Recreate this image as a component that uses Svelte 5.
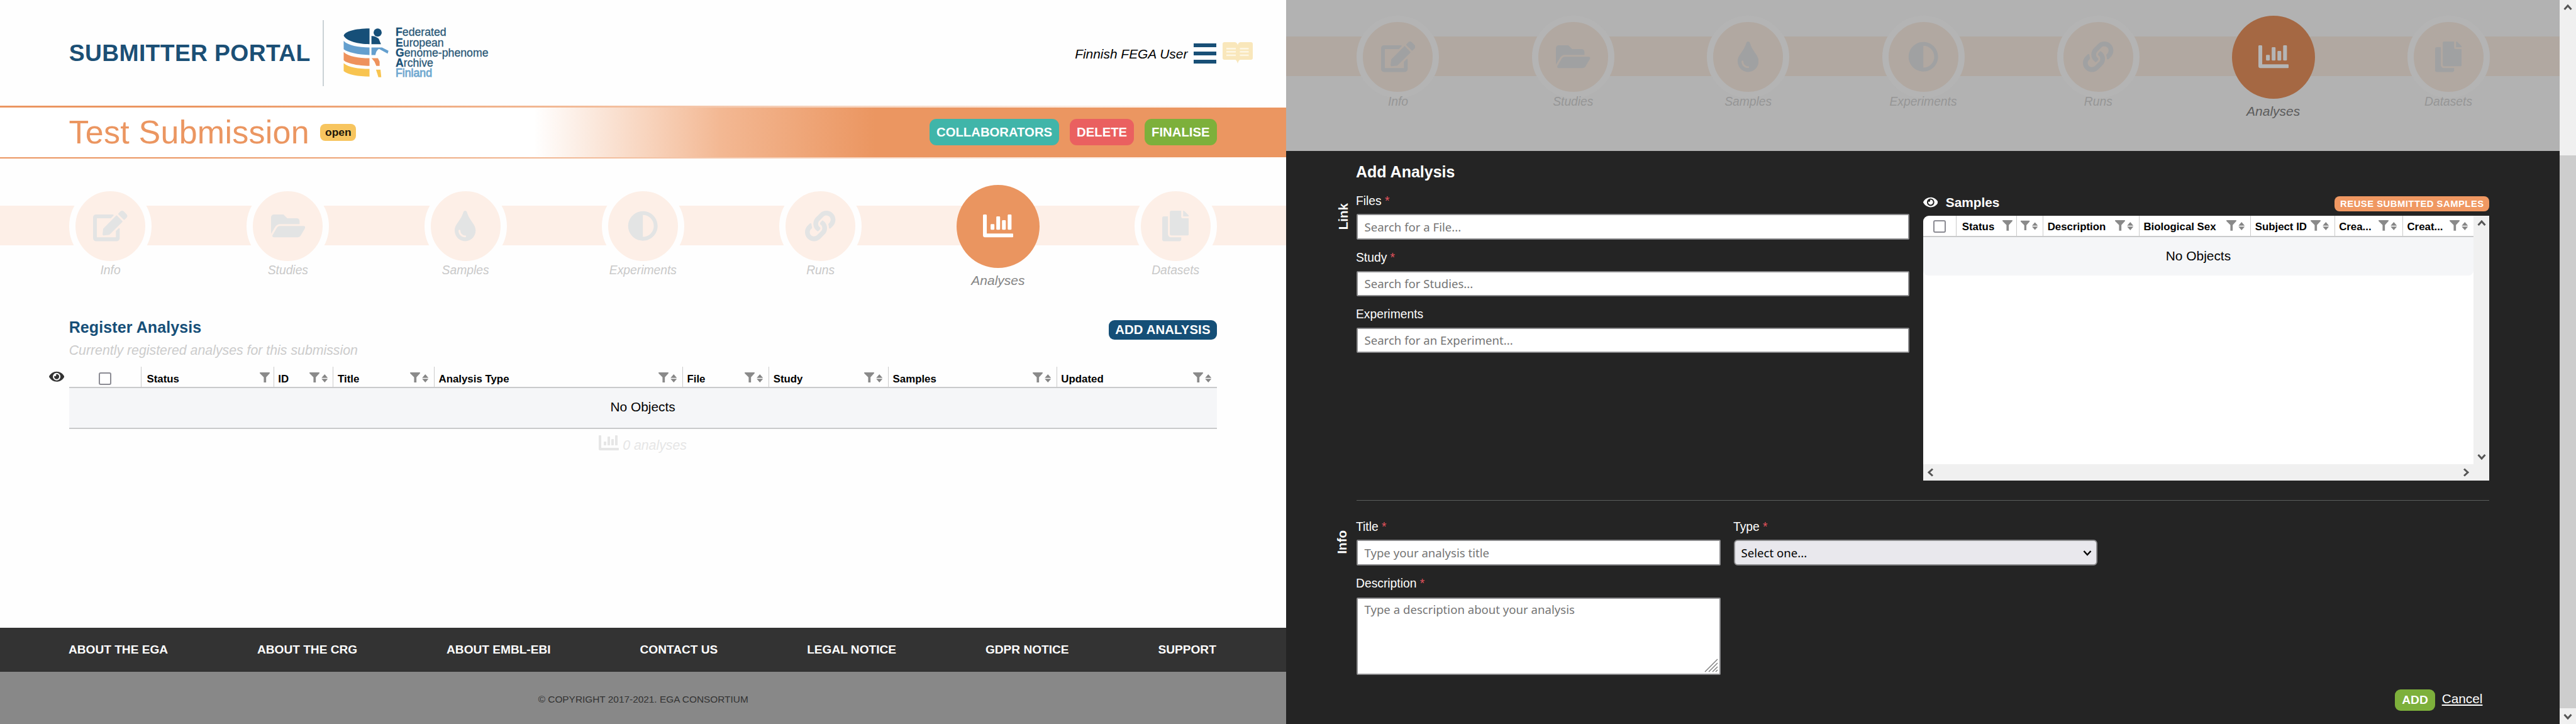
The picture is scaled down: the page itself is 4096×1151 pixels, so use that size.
<script>
  const icons = {
    edit: [576, 'M402.6 83.2l90.2 90.2c3.8 3.8 3.8 10 0 13.8L274.4 405.6l-92.8 10.3c-12.4 1.4-22.9-9.1-21.5-21.5l10.3-92.8L388.8 83.2c3.8-3.8 10-3.8 13.8 0zm162-22.9l-48.8-48.8c-15.2-15.2-39.9-15.2-55.2 0l-35.4 35.4c-3.8 3.8-3.8 10 0 13.8l90.2 90.2c3.8 3.8 10 3.8 13.8 0l35.4-35.4c15.2-15.3 15.2-40 0-55.2zM384 346.2V448H64V128h229.8c3.2 0 6.2-1.3 8.5-3.5l40-40c7.6-7.6 2.2-20.5-8.5-20.5H48C21.5 64 0 85.5 0 112v352c0 26.5 21.5 48 48 48h352c26.5 0 48-21.5 48-48V306.2c0-10.7-12.9-16-20.5-8.5l-40 40c-2.2 2.3-3.5 5.3-3.5 8.5z'],
    folder: [576, 'M572.694 292.093L500.27 416.248A63.997 63.997 0 0 1 444.989 448H45.025c-18.523 0-30.064-20.093-20.731-36.093l72.424-124.155A64 64 0 0 1 152 256h399.964c18.523 0 30.064 20.093 20.73 36.093zM152 224h328v-48c0-26.51-21.49-48-48-48H272l-64-64H48C21.49 64 0 85.49 0 112v278.046l69.077-118.418C86.214 242.25 117.989 224 152 224z'],
    tint: [352, 'M205.22 22.09c-7.94-28.78-49.44-30.12-58.44 0C100.01 179.85 0 222.72 0 333.91 0 432.35 78.72 512 176 512s176-79.65 176-178.09c0-111.75-99.79-153.34-146.78-311.82zM176 448c-61.75 0-112-50.25-112-112 0-8.84 7.16-16 16-16s16 7.16 16 16c0 44.11 35.89 80 80 80 8.84 0 16 7.16 16 16s-7.16 16-16 16z'],
    adjust: [512, 'M8 256c0 136.966 111.033 248 248 248s248-111.034 248-248S392.966 8 256 8 8 119.033 8 256zm248 184V72c101.705 0 184 82.311 184 184 0 101.705-82.311 184-184 184z'],
    link: [512, 'M326.612 185.391c59.747 59.809 58.927 155.698.36 214.59-.11.12-.24.25-.36.37l-67.2 67.2c-59.27 59.27-155.699 59.262-214.96 0-59.27-59.26-59.27-155.7 0-214.96l37.106-37.106c9.84-9.84 26.786-3.3 27.294 10.606.648 17.722 3.826 35.527 9.69 52.721 1.986 5.822.567 12.262-3.783 16.612l-13.087 13.087c-28.026 28.026-28.905 73.66-1.155 101.96 28.024 28.579 74.086 28.749 102.325.51l67.2-67.19c28.191-28.191 28.073-73.757 0-101.83-3.701-3.694-7.429-6.564-10.341-8.569a16.037 16.037 0 0 1-6.947-12.606c-.396-10.567 3.348-21.456 11.698-29.806l21.054-21.055c5.521-5.521 14.182-6.199 20.584-1.731a152.482 152.482 0 0 1 20.522 17.197zM467.547 44.449c-59.261-59.262-155.69-59.27-214.96 0l-67.2 67.2c-.12.12-.25.25-.36.37-58.566 58.892-59.387 154.781.36 214.59a152.454 152.454 0 0 0 20.521 17.196c6.402 4.468 15.064 3.789 20.584-1.731l21.054-21.055c8.35-8.35 12.094-19.239 11.698-29.806a16.037 16.037 0 0 0-6.947-12.606c-2.912-2.005-6.64-4.875-10.341-8.569-28.073-28.073-28.191-73.639 0-101.83l67.2-67.19c28.239-28.239 74.3-28.069 102.325.51 27.75 28.3 26.872 73.934-1.155 101.96l-13.087 13.087c-4.35 4.35-5.769 10.79-3.783 16.612 5.864 17.194 9.042 34.999 9.69 52.721.509 13.906 17.454 20.446 27.294 10.606l37.106-37.106c59.271-59.259 59.271-155.699.001-214.959z'],
    copy: [448, 'M320 448v40c0 13.255-10.745 24-24 24H24c-13.255 0-24-10.745-24-24V120c0-13.255 10.745-24 24-24h72v296c0 30.879 25.121 56 56 56h168zm0-344V0H152c-13.255 0-24 10.745-24 24v368c0 13.255 10.745 24 24 24h272c13.255 0 24-10.745 24-24V128H344c-13.2 0-24-10.8-24-24zm120.971-31.029L375.029 7.029A24 24 0 0 0 358.059 0H352v96h96v-6.059a24 24 0 0 0-7.029-16.97z'],
    chart: [512, 'M332.8 320h38.4c6.4 0 12.8-6.4 12.8-12.8V172.8c0-6.4-6.4-12.8-12.8-12.8h-38.4c-6.4 0-12.8 6.4-12.8 12.8v134.4c0 6.4 6.4 12.8 12.8 12.8zm96 0h38.4c6.4 0 12.8-6.4 12.8-12.8V76.8c0-6.4-6.4-12.8-12.8-12.8h-38.4c-6.4 0-12.8 6.4-12.8 12.8v230.4c0 6.4 6.4 12.8 12.8 12.8zm-288 0h38.4c6.4 0 12.8-6.4 12.8-12.8v-70.4c0-6.4-6.4-12.8-12.8-12.8h-38.4c-6.4 0-12.8 6.4-12.8 12.8v70.4c0 6.4 6.4 12.8 12.8 12.8zm96 0h38.4c6.4 0 12.8-6.4 12.8-12.8V108.8c0-6.4-6.4-12.8-12.8-12.8h-38.4c-6.4 0-12.8 6.4-12.8 12.8v198.4c0 6.4 6.4 12.8 12.8 12.8zM496 384H64V80c0-8.84-7.16-16-16-16H16C7.16 64 0 71.16 0 80v336c0 17.67 14.33 32 32 32h464c8.84 0 16-7.16 16-16v-32c0-8.84-7.16-16-16-16z'],
    eye: [576, 'M572.52 241.4C518.29 135.59 410.93 64 288 64S57.68 135.64 3.48 241.41a32.35 32.35 0 0 0 0 29.19C57.71 376.41 165.07 448 288 448s230.32-71.64 284.52-177.41a32.35 32.35 0 0 0 0-29.19zM288 400a144 144 0 1 1 144-144 143.93 143.93 0 0 1-144 144zm0-240a95.31 95.31 0 0 0-25.31 3.79 47.85 47.85 0 0 1-66.9 66.9A95.78 95.78 0 1 0 288 160z']
  };

  const steps = [
    { label: 'Info', icon: 'edit' },
    { label: 'Studies', icon: 'folder' },
    { label: 'Samples', icon: 'tint' },
    { label: 'Experiments', icon: 'adjust' },
    { label: 'Runs', icon: 'link' },
    { label: 'Analyses', icon: 'chart', active: true },
    { label: 'Datasets', icon: 'copy' }
  ];

  const analysisColumns = [
    { label: 'Status', sort: false },
    { label: 'ID', sort: true },
    { label: 'Title', sort: true },
    { label: 'Analysis Type', sort: true },
    { label: 'File', sort: true },
    { label: 'Study', sort: true },
    { label: 'Samples', sort: true },
    { label: 'Updated', sort: true }
  ];

  const sampleColumns = [
    { label: 'Status', sort: false },
    { label: '', sort: true },
    { label: 'Description', sort: true },
    { label: 'Biological Sex', sort: true },
    { label: 'Subject ID', sort: true },
    { label: 'Crea...', sort: true },
    { label: 'Creat...', sort: true }
  ];

  const linkFields = [
    { label: 'Files', required: true, placeholder: 'Search for a File...' },
    { label: 'Study', required: true, placeholder: 'Search for Studies...' },
    { label: 'Experiments', required: false, placeholder: 'Search for an Experiment...' }
  ];

  const footerLinks = ['ABOUT THE EGA', 'ABOUT THE CRG', 'ABOUT EMBL-EBI', 'CONTACT US', 'LEGAL NOTICE', 'GDPR NOTICE', 'SUPPORT'];
</script>

{#snippet icon(name)}
  <svg class="icon" viewBox="0 0 {icons[name][0]} 512" aria-hidden="true"><path d={icons[name][1]} /></svg>
{/snippet}

{#snippet stepper()}
  <nav class="steps">
    {#each steps as step}
      <div class="step" class:active={step.active}>
        <div class="slot"><div class="disc">{@render icon(step.icon)}</div></div>
        <span class="caption">{step.label}</span>
      </div>
    {/each}
  </nav>
{/snippet}

{#snippet headCells(columns)}
  <div class="cell check"><span class="box"></span></div>
  {#each columns as column}
    <div class="cell" class:unsorted={!column.sort}>
      <span class="name">{column.label}</span>
      <svg class="funnel" viewBox="0 0 16 17" aria-hidden="true"><path d="M0 0h16v1.6L10.2 8v9H6.4V8L0 1.6z" /></svg>
      {#if column.sort}
        <svg class="sort" viewBox="0 0 10 13" aria-hidden="true"><path d="M5 0l5 5.700H0zM5 13L0 7.300h10z" /></svg>
      {/if}
    </div>
  {/each}
{/snippet}

{#snippet chevron(direction)}
  <svg class="chevron {direction}" viewBox="0 0 14 14" aria-hidden="true"><path d="M1.5 10L7 4l5.500 6" /></svg>
{/snippet}

<div class="screens">
  <section class="portal">
    <header>
      <h1>SUBMITTER PORTAL</h1>
      <div class="brand">
        <svg class="mark" viewBox="52 65 302 330" aria-hidden="true">
          <g fill="#164f78">
            <path d="M54 118C62 88 130 71 225 70V174C150 173 72 155 54 118z" />
            <circle cx="279" cy="97" r="27" />
            <path d="M238 120Q262 118 286 138L301 174H238z" />
          </g>
          <g fill="#649fce">
            <path d="M54 152C85 184 150 194 225 196V246C150 244 82 230 54 208z" />
            <path d="M238 196H308L351 218L345 237L288 205Q268 216 264 246H238z" />
          </g>
          <g fill="#ee925c">
            <path d="M54 226C85 256 150 266 225 267V318C150 316 75 302 54 280z" />
            <path d="M239 267H281L292 290V318H270L258 290z" />
          </g>
          <g fill="#f8c450">
            <path d="M54 300C85 328 150 337 225 338V389C150 387 82 376 54 352z" />
            <path d="M268 343H298L303 393H284z" />
          </g>
        </svg>
        <div class="brand-name">
          <span><b>F</b>ederated</span>
          <span><b>E</b>uropean</span>
          <span><b>G</b>enome-phenome</span>
          <span><b>A</b>rchive</span>
          <span class="country">Finland</span>
        </div>
      </div>
      <div class="account">
        <em>Finnish FEGA User</em>
        <div class="burger"><i></i><i></i><i></i></div>
        <svg class="book" viewBox="0 0 48 34" aria-hidden="true">
          <path d="M3 0H20Q23.500 1 24 5Q24.500 1 28 0H45Q48 0 48 3V25Q48 28 45 28H28Q25.500 28.500 24 34Q22.500 28.500 20 28H3Q0 28 0 25V3Q0 0 3 0z" />
          <g><rect x="6" y="9" width="15" height="2.600" /><rect x="6" y="14" width="15" height="2.600" /><rect x="6" y="19.500" width="15" height="2.600" /><rect x="27.500" y="9" width="14" height="2.600" /><rect x="27.500" y="14" width="14" height="2.600" /><rect x="27.500" y="19.500" width="14" height="2.600" /></g>
        </svg>
      </div>
    </header>

    <div class="rule"></div>
    <div class="band">
      <span class="submission">Test Submission</span>
      <span class="state">open</span>
      <div class="actions">
        <button class="btn teal">COLLABORATORS</button>
        <button class="btn red">DELETE</button>
        <button class="btn green">FINALISE</button>
      </div>
    </div>
    <div class="rule"></div>

    {@render stepper()}

    <main>
      <div class="heading">
        <h2>Register Analysis</h2>
        <button class="btn navy">ADD ANALYSIS</button>
      </div>
      <p class="hint">Currently registered analyses for this submission</p>
      <div class="listing">
        <div class="toggle">{@render icon('eye')}</div>
        <div class="table">
          <div class="head">{@render headCells(analysisColumns)}</div>
          <div class="empty">No Objects</div>
        </div>
      </div>
      <div class="count">{@render icon('chart')}<em>0 analyses</em></div>
    </main>

    <footer>
      <div class="links">
        {#each footerLinks as link}<span>{link}</span>{/each}
      </div>
      <div class="legal">© COPYRIGHT 2017-2021. EGA CONSORTIUM</div>
    </footer>
  </section>

  <section class="dialog">
    <div class="dimmed">{@render stepper()}</div>

    <form class="modal">
      <h2>Add Analysis</h2>

      <div class="group">
        <span class="side">Link</span>
        <div class="linking">
          <div class="fields">
            {#each linkFields as field}
              <label>
                <span class="label">{field.label}{#if field.required}<i>*</i>{/if}</span>
                <input type="text" placeholder={field.placeholder} />
              </label>
            {/each}
          </div>
          <div class="samples">
            <div class="samples-title">
              {@render icon('eye')}
              <strong>Samples</strong>
              <button type="button" class="reuse">REUSE SUBMITTED SAMPLES</button>
            </div>
            <div class="pane">
              <div class="table">
                <div class="head">{@render headCells(sampleColumns)}</div>
                <div class="empty">No Objects</div>
              </div>
              <div class="vbar">{@render chevron('up')}{@render chevron('down')}</div>
              <div class="hbar">{@render chevron('left')}{@render chevron('right')}</div>
              <div class="corner"></div>
            </div>
          </div>
        </div>
      </div>

      <hr />

      <div class="group info">
        <span class="side">Info</span>
        <div class="details">
          <label>
            <span class="label">Title<i>*</i></span>
            <input type="text" placeholder="Type your analysis title" />
          </label>
          <label>
            <span class="label">Type<i>*</i></span>
            <span class="picker">
              <select><option>Select one...</option></select>
              {@render chevron('down')}
            </span>
          </label>
          <label class="long">
            <span class="label">Description<i>*</i></span>
            <span class="area">
              <textarea placeholder="Type a description about your analysis"></textarea>
              <svg class="grip" viewBox="0 0 22 22" aria-hidden="true"><path d="M1 21L21 1M7 21L21 7M13 21L21 13M18 21L21 18" /></svg>
            </span>
          </label>
        </div>
      </div>

      <div class="submit">
        <button type="button" class="add">ADD</button>
        <a href="#cancel">Cancel</a>
      </div>
    </form>
  </section>

  <div class="scrollbar">{@render chevron('up')}<div class="thumb"></div>{@render chevron('down')}</div>
</div>

<style>
  :global(body) { margin: 0; overflow: hidden; background: #fff; }
  .screens {
    display: flex; width: 4096px; height: 1151px; overflow: hidden;
    font-family: 'Liberation Sans', Arial, sans-serif; color: #000;
  }
  .screens :is(h1, h2, p, button) { margin: 0; padding: 0; border: 0; font-family: inherit; }
  b, strong { font-weight: 700; }
  .icon { display: block; fill: currentColor; }

  .portal { width: 2045.4px; flex: none; display: flex; flex-direction: column; background: #fefefe; }
  header { display: flex; align-items: center; height: 168px; padding: 0 53px 0 109.700px; box-sizing: border-box; flex: none; }
  h1 { width: 403.300px; white-space: nowrap; font-size: 37.3px; line-height: 44px; letter-spacing: 0.350px; color: #1b4f75; }
  .brand { display: flex; align-items: center; height: 105px; padding-left: 31px; border-left: 2px solid #cbd2d6; gap: 10.500px; }
  .mark { width: 72.500px; height: 79.3px; }
  .brand-name { display: flex; flex-direction: column; font-size: 17.700px; color: #2a5877; -webkit-text-stroke: 0.3px #2a5877; }
  .brand-name span { line-height: 16.3px; white-space: nowrap; }
  .brand-name b { color: #164f78; }
  .brand-name .country { color: #70a8d0; -webkit-text-stroke: 0.8px #70a8d0; }
  .account { display: flex; align-items: center; margin-left: auto; }
  .account em { font-size: 20.9px; line-height: 24px; margin: 4px 9.500px 0 0; white-space: nowrap; }
  .burger { display: flex; flex-direction: column; justify-content: space-between; width: 36.500px; height: 31.700px; margin: 2px 10px 0 0; }
  .burger i { height: 6px; background: #184f76; }
  .book { width: 48px; height: 34px; fill: #f9e7bb; }
  .book g { fill: #fdf6e3; }

  .rule { flex: none; height: 2.700px; background: linear-gradient(90deg, #eb9661, #eb9661 15%, #fff); }
  .band {
    flex: none; display: flex; align-items: center; height: 79.100px; padding: 0 110.900px 0 109.500px;
    background: linear-gradient(90deg, #fff 41.500%, #f3b893 56%, #eb9661 68%);
  }
  .submission { font-size: 52px; line-height: 60px; letter-spacing: 0.250px; color: #eb9661; white-space: nowrap; }
  .state { margin-left: 17.500px; width: 57px; height: 27px; line-height: 27px; border-radius: 8px; background: #f7c55f; text-align: center; font-size: 17.400px; font-weight: 700; color: #1c160a; }
  .actions { display: flex; gap: 17px; margin-left: auto; }
  .btn { height: 42.3px; border-radius: 11px; color: #fff; font-size: 20.3px; font-weight: 700; line-height: 42px; text-align: center; white-space: nowrap; }
  .screens .btn { padding: 0 11px; }
  .teal { background: #40b5a9; }
  .red { background: #ea6060; }
  .green { background: #7db03b; }

  .steps {
    display: flex; justify-content: space-between; padding: 41.600px 110.900px 0 110.300px; height: 214.800px; box-sizing: content-box; flex: none;
    background: linear-gradient(#fdefe7, #fdefe7) 0 74.500px / 100% 63.200px no-repeat;
  }
  .step { width: 130.600px; display: flex; flex-direction: column; align-items: center; color: #e3e4e4; }
  .slot { height: 131px; display: flex; align-items: center; justify-content: center; }
  .disc { width: 111px; height: 111px; border: 10px solid #fefefe; border-radius: 50%; background: #fdefe7; display: flex; align-items: center; justify-content: center; }
  .disc .icon { height: 48.400px; }
  .caption { margin-top: -5.600px; font-size: 19.300px; line-height: 22px; font-style: italic; color: #c9c9c9; white-space: nowrap; }
  .active { color: #fff; }
  .active .disc { width: 132px; height: 132px; border: 0; background: #ea9560; }
  .active .caption { margin-top: 10.300px; font-size: 21px; color: #858585; }

  main { padding: 0 110.900px 0 109.700px; flex: 1; }
  .heading { display: flex; justify-content: space-between; height: 31.500px; }
  .heading h2 { font-size: 25px; line-height: 23.400px; letter-spacing: 0.100px; color: #164f78; }
  .btn.navy { height: 31.500px; line-height: 31.500px; border-radius: 9px; background: #154f77; font-size: 20.3px; letter-spacing: 0.150px; }
  .screens .navy { padding: 0; width: 171.200px; }
  .hint { padding-top: 3.800px !important; font-size: 21.300px; line-height: 26px; font-style: italic; color: #cccccc; }
  .listing { display: grid; grid-template-columns: 31.400px 1fr; margin: 12.400px 0 0 -31.400px; }
  .toggle { padding-top: 5.500px; color: #333; }
  .toggle .icon { height: 21.500px; }
  .head { display: grid; }
  .portal .head { grid-template-columns: 114.300px 210.800px 94.700px 160.500px 395px 137.200px 189.900px 267.800px 254.600px; height: 32.900px; border-bottom: 2px solid #c9cacb; }
  .cell { display: flex; align-items: flex-start; padding: 0 8.300px 0 6.500px; border-left: 1.500px solid #cbcbcb; overflow: hidden; min-width: 0; box-sizing: border-box; }
  .cell.unsorted { padding: 0 6px 0 8.500px; }
  .cell.check { border-left: 0; justify-content: center; padding: 0; }
  .name { flex: 1; font-size: 16.850px; font-weight: 700; line-height: 39.400px; white-space: nowrap; }
  .box { width: 15.500px; height: 16px; margin: 9.200px 0 0; border: 2.800px solid #8b8b93; border-radius: 3px; background: #fff; }
  .funnel { width: 16px; height: 16.700px; margin-top: 9.200px; fill: #8a8a8a; }
  .sort { width: 10.500px; height: 13px; margin: 12px 0 0 3px; fill: #858585; }
  .empty { display: flex; align-items: center; justify-content: center; background: #f5f6f8; font-size: 20.900px; }
  .portal .empty { height: 59.300px; padding-bottom: 3px; border-bottom: 2px solid #c9cacb; }
  .count { display: flex; justify-content: center; align-items: flex-start; gap: 6px; padding-top: 6.300px; color: #e6e6e6; }
  .count .icon { height: 32px; }
  .count em { font-size: 21.300px; line-height: 41.600px; }

  footer { flex: none; }
  .links { display: flex; justify-content: space-between; align-items: center; height: 69.200px; padding: 0 111.500px 0 109px; background: #333; color: #fff; font-size: 19.100px; font-weight: 700; }
  .legal { height: 83.400px; line-height: 87px; background: #888; text-align: center; color: #333; font-size: 15.400px; }

  .dialog { flex: 1; display: flex; flex-direction: column; background: #242424; }
  .dimmed { height: 240px; flex: none; overflow: hidden; background: #b2b2b2; }
  .dimmed .steps { padding: 25.100px 111.600px 0 112.300px; background: linear-gradient(#b1a8a1, #b1a8a1) 0 58px / 100% 63.400px no-repeat; }
  .dimmed .step { color: #a0a1a2; }
  .dimmed .disc { border-color: #b4b4b4; background: #b1a8a1; }
  .dimmed .caption { color: #969696; }
  .dimmed .active { color: #b5b5b5; }
  .dimmed .active .disc { background: #a56843; }
  .dimmed .active .caption { margin-top: 9.700px; color: #5c5c5c; }

  .modal { flex: 1; padding: 18.300px 111.600px 0 111.600px; color: #fff; }
  .modal h2 { font-size: 25px; line-height: 30px; margin-left: -1px; }
  .group { display: grid; grid-template-columns: 33px 1fr; align-items: start; margin: 19.500px 0 0 -33px; }
  .side { writing-mode: vertical-rl; transform: rotate(180deg); justify-self: start; width: 24px; line-height: 24px; margin-top: 15px; font-size: 20.500px; font-weight: 700; }
  .linking { display: grid; grid-template-columns: 879px 900.700px; gap: 21.700px; }
  .fields { display: flex; flex-direction: column; gap: 17.200px; }
  label { display: flex; flex-direction: column; gap: 8.700px; }
  .label { font-size: 19.300px; line-height: 24px; margin-left: -1px; }
  .label i { font-style: normal; color: #e0525c; margin-left: 5.300px; }
  input, select, textarea {
    display: block; width: 100%; height: 40.300px; box-sizing: border-box; margin: 0; padding: 0 10.500px;
    border: 2px solid #8b8b8d; border-radius: 2px; background: #fff; font: 18.600px 'Noto Sans', sans-serif; outline: 0;
  }
  ::placeholder { color: #757575; opacity: 1; }
  .samples-title { display: flex; align-items: center; height: 24.500px; margin-top: 3.900px; }
  .samples-title .icon { height: 21px; margin: -4px 12.500px 0 0; }
  .samples-title strong { font-size: 20.800px; line-height: 24px; margin-top: -3.500px; }
  .reuse { margin-left: auto !important; width: 246px; height: 24.500px; border-radius: 8px; background: #f09862; color: #fff; font-size: 14.800px; font-weight: 700; line-height: 24.500px; letter-spacing: 0.500px; white-space: nowrap; }
  .pane { display: grid; grid-template: 394.800px 25.400px / 1fr 25.200px; margin-top: 7.300px; border-radius: 9px 0 0 0; overflow: hidden; background: #fff; color: #000; }
  .pane .head { grid-template-columns: 52.600px 95.500px 42.400px 152.800px 177.200px 133.500px 108.300px 113.200px; height: 31.300px; border-bottom: 2px solid #c9cacb; }
  .pane .name { line-height: 35.800px; }
  .pane .box { margin-top: 6.500px; }
  .pane .funnel { margin-top: 7px; }
  .pane .sort { margin-top: 9.800px; }
  .pane .empty { height: 61px; border-radius: 0 0 8px 8px; }
  .vbar, .hbar, .corner { background: #f0f0f0; }
  .vbar { display: flex; flex-direction: column; justify-content: space-between; align-items: center; padding: 5px 0; }
  .hbar { display: flex; justify-content: space-between; align-items: center; padding: 0 5px; }
  .chevron { width: 14px; height: 14px; fill: none; stroke: #555; stroke-width: 3; }
  .down { transform: rotate(180deg); }
  .left { transform: rotate(-90deg); }
  .right { transform: rotate(90deg); }

  hr { height: 1.500px; margin: 31.200px 0 0; border: 0; background: #5b5d5c; }
  .info { margin-top: 29.300px; }
  .info .side { margin-top: 17px; margin-left: -1.500px; }
  .details { display: grid; grid-template-columns: 579px 578.300px; gap: 17.400px 21px; }
  .long { gap: 10px; }
  .picker, .area { position: relative; display: block; }
  select { appearance: none; background: #e9e8ed; border-radius: 6px; color: #000; padding: 0 9.500px; }
  .picker .chevron { position: absolute; right: 9px; top: 14px; stroke: #000; stroke-width: 2.500; }
  textarea { height: 122.800px; padding: 3.500px 10.500px; line-height: 25px; resize: none; }
  .grip { position: absolute; right: 3.500px; bottom: 4px; width: 22px; height: 22px; stroke: #777; stroke-width: 1.300; }
  .submit { display: flex; justify-content: flex-end; align-items: center; gap: 11px; margin-top: 22.800px; padding-right: 11px; }
  .add { width: 63.300px; height: 34.100px; border-radius: 9px; background: #7db03b; color: #fff; font-size: 19.200px; font-weight: 700; line-height: 34px; }
  .submit a { color: #fff; font-size: 20.800px; line-height: 30px; text-decoration: underline; margin-top: -3px; }

  .scrollbar { flex: none; width: 26px; display: flex; flex-direction: column; align-items: center; justify-content: space-between; background: #f0f0f0; padding: 5px 0; box-sizing: border-box; }
  .thumb { width: 100%; height: 879.400px; margin: 227.600px 0 0; background: #cdcdcd; }
  .scrollbar .down { margin-top: auto; }
</style>
